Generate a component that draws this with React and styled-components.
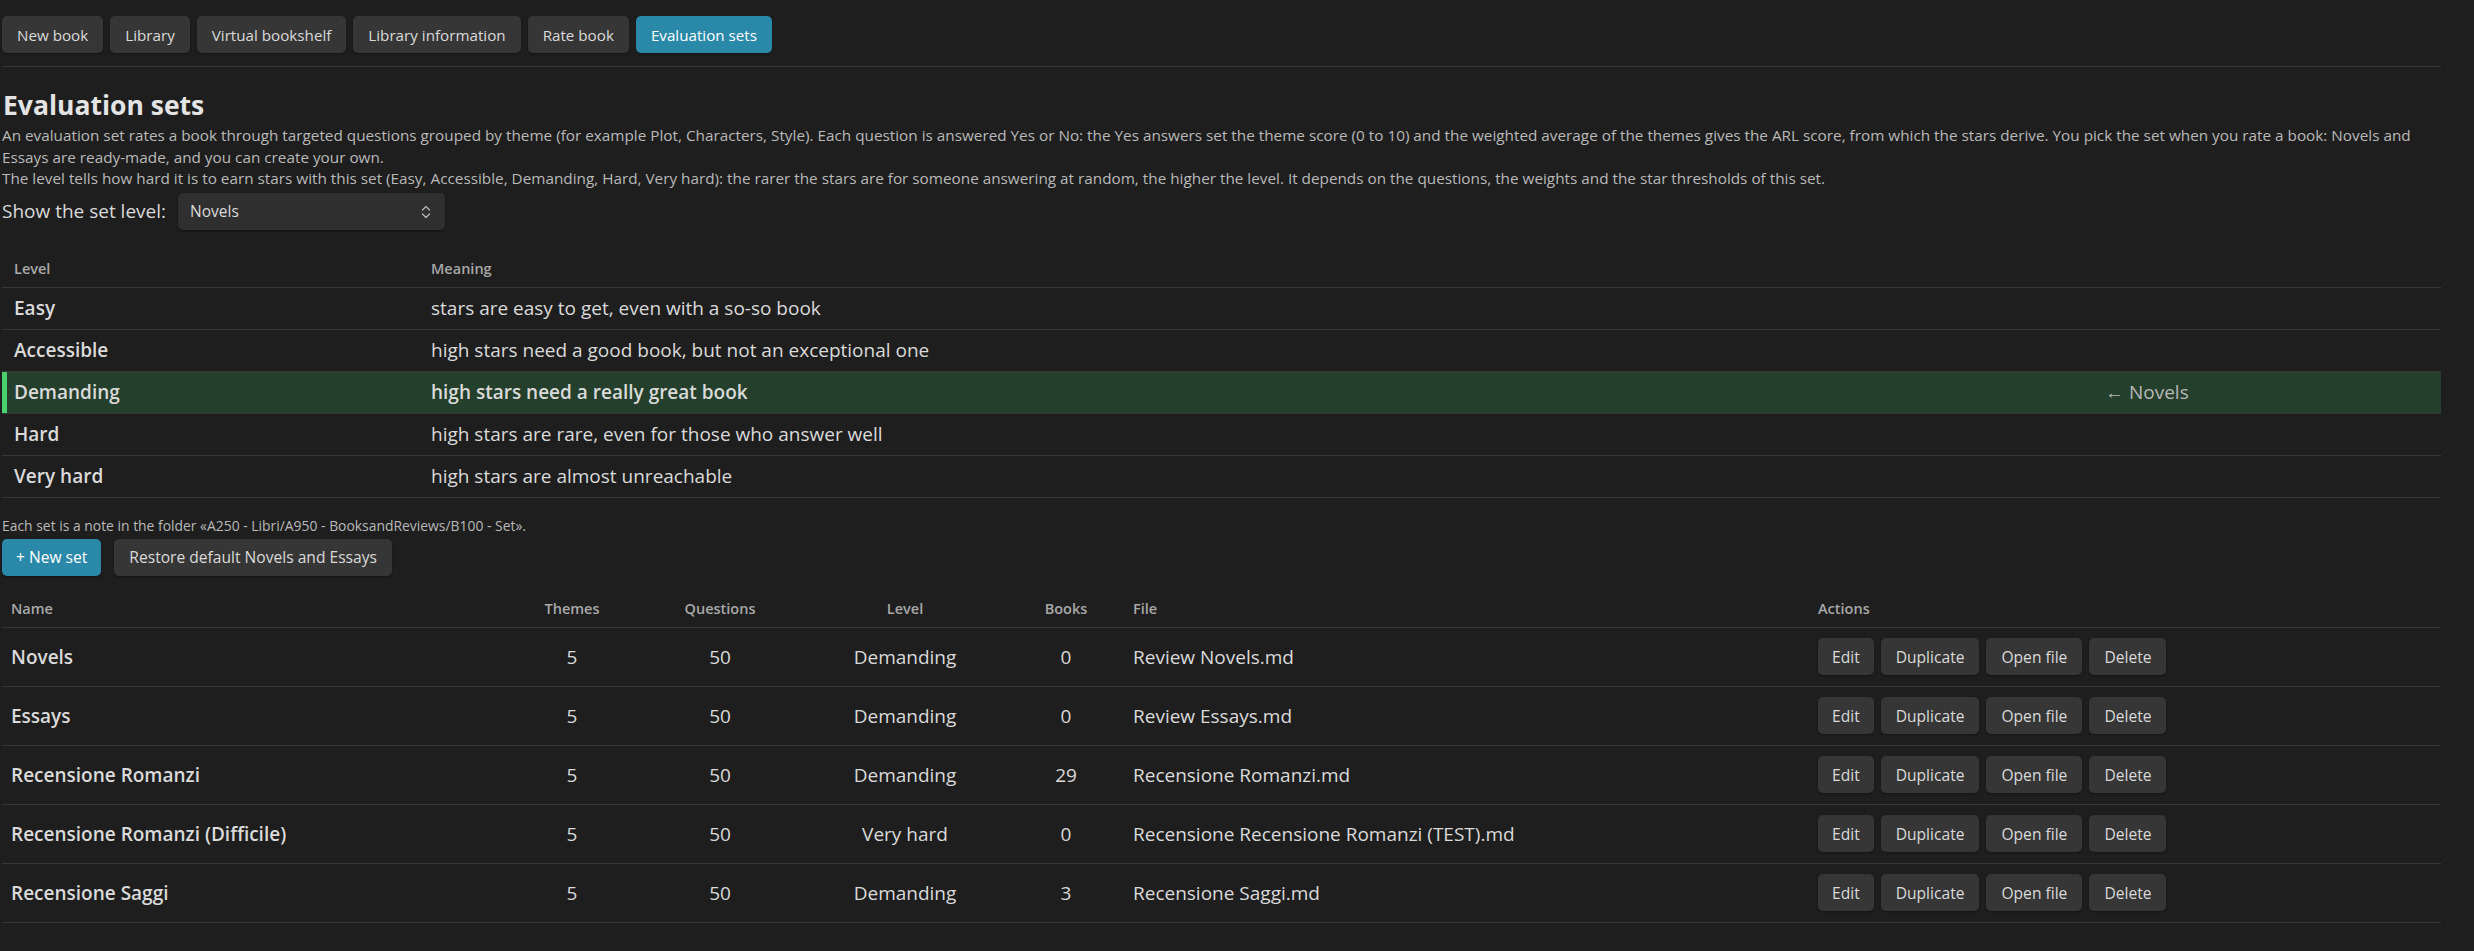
import React from 'react';
import styled, { createGlobalStyle } from 'styled-components';

const GlobalStyle = createGlobalStyle`
  html, body {
    margin: 0;
    background: #1e1e1e;
  }
  body {
    font-family: "Open Sans", "Noto Sans", sans-serif;
    color: #dadada;
  }
`;

/**
 * Styled Components
 */
const Page = styled.div`
  padding: 16px 33px 40px 2px;
`;

const NavBar = styled.div`
  display: flex;
  gap: 7px;
  padding-bottom: 13px;
  border-bottom: 1px solid #363636;
`;

const Button = styled.button`
  height: 37px;
  padding: 0 ${(p) => (p.$tight ? 14 : 15)}px;
  border: none;
  border-radius: 5px;
  background: ${(p) => (p.$accent ? '#2a88a8' : '#363636')};
  color: ${(p) => (p.$accent ? '#ffffff' : '#dadada')};
  font-family: inherit;
  font-size: ${(p) => (p.$nav ? 15.2 : 15.6)}px;
  box-shadow: 0 1px 2px rgba(0, 0, 0, 0.35);
  cursor: pointer;
  white-space: nowrap;
`;

const Title = styled.h2`
  margin: 21px 0 3px 1px;
  font-size: 26.5px;
  font-weight: 700;
  line-height: 34px;
  color: #e4e4e4;
`;

const Intro = styled.p`
  margin: 0;
  font-size: 15.3px;
  line-height: 21.5px;
  color: #b9b9b9;
`;

const Picker = styled.div`
  display: flex;
  align-items: center;
  gap: 12px;
  margin-top: 3px;
`;

const PickerLabel = styled.label`
  font-size: 19px;
  color: #dadada;
`;

const SelectWrap = styled.div`
  position: relative;
  width: 267px;
`;

const Select = styled.select`
  appearance: none;
  width: 100%;
  height: 37px;
  padding: 0 12px;
  border: none;
  border-radius: 5px;
  background: #2f2f2f;
  color: #dadada;
  font-family: inherit;
  font-size: 15.5px;
  box-shadow: 0 1px 2px rgba(0, 0, 0, 0.4);
`;

const SelectIcon = styled.svg`
  position: absolute;
  right: 14px;
  top: 12px;
  pointer-events: none;
`;

const LevelTable = styled.div`
  margin-top: 21px;
`;

const LevelRow = styled.div`
  display: grid;
  grid-template-columns: 417px 1674px 1fr;
  align-items: center;
  height: ${(p) => (p.$head ? 36 : 41)}px;
  border-bottom: 1px solid #363636;
  background: ${(p) => (p.$active ? '#243f2b' : 'transparent')};
  box-shadow: ${(p) => (p.$active ? 'inset 5px 0 0 #4bd16c' : 'none')};
`;

const LevelCell = styled.div`
  padding: 0 12px;
  font-size: ${(p) => (p.$head ? 14.5 : 19)}px;
  font-weight: ${(p) => (p.$head || p.$bold ? 600 : 400)};
  color: ${(p) => (p.$head ? '#a8a8a8' : p.$muted ? '#b8b8b8' : '#dadada')};
`;

const Note = styled.div`
  margin-top: 18px;
  font-size: 13.9px;
  line-height: 20px;
  color: #b9b9b9;
`;

const Toolbar = styled.div`
  display: flex;
  gap: 13px;
  margin-top: 3px;
`;

const SetsTable = styled.div`
  margin-top: 14px;
`;

const SetRow = styled.div`
  display: grid;
  grid-template-columns: 504px 132px 164px 206px 116px 685px 1fr;
  align-items: center;
  min-height: ${(p) => (p.$head ? 37 : 58)}px;
  border-bottom: 1px solid #363636;
`;

const SetCell = styled.div`
  padding: 0 9px;
  text-align: ${(p) => (p.$center ? 'center' : 'left')};
  font-size: ${(p) => (p.$head ? 14.5 : 19)}px;
  font-weight: ${(p) => (p.$head || p.$bold ? 600 : 400)};
  color: ${(p) => (p.$head ? '#a8a8a8' : '#dadada')};
`;

const Actions = styled.div`
  display: flex;
  gap: 7px;
`;

/**
 * Data
 */
const tabs = ['New book', 'Library', 'Virtual bookshelf', 'Library information', 'Rate book', 'Evaluation sets'];

const levels = [
  ['Easy', 'stars are easy to get, even with a so-so book'],
  ['Accessible', 'high stars need a good book, but not an exceptional one'],
  ['Demanding', 'high stars need a really great book'],
  ['Hard', 'high stars are rare, even for those who answer well'],
  ['Very hard', 'high stars are almost unreachable'],
];

const sets = [
  { name: 'Novels', themes: 5, questions: 50, level: 'Demanding', books: 0, file: 'Review Novels.md' },
  { name: 'Essays', themes: 5, questions: 50, level: 'Demanding', books: 0, file: 'Review Essays.md' },
  { name: 'Recensione Romanzi', themes: 5, questions: 50, level: 'Demanding', books: 29, file: 'Recensione Romanzi.md' },
  { name: 'Recensione Romanzi (Difficile)', themes: 5, questions: 50, level: 'Very hard', books: 0, file: 'Recensione Recensione Romanzi (TEST).md' },
  { name: 'Recensione Saggi', themes: 5, questions: 50, level: 'Demanding', books: 3, file: 'Recensione Saggi.md' },
];

const App = () => {
  const selected = 'Novels';
  const selectedLevel = 'Demanding';

  return (
    <Page>
      <GlobalStyle />
      <NavBar>
        {tabs.map((t) => (
          <Button key={t} $nav $accent={t === 'Evaluation sets'}>{t}</Button>
        ))}
      </NavBar>

      <Title>Evaluation sets</Title>
      <Intro>
        An evaluation set rates a book through targeted questions grouped by theme (for example Plot, Characters, Style). Each question is answered Yes or No: the Yes answers set the theme score (0 to 10) and the weighted average of the themes gives the ARL score, from which the stars derive. You pick the set when you rate a book: Novels and Essays are ready-made, and you can create your own.
      </Intro>
      <Intro>
        The level tells how hard it is to earn stars with this set (Easy, Accessible, Demanding, Hard, Very hard): the rarer the stars are for someone answering at random, the higher the level. It depends on the questions, the weights and the star thresholds of this set.
      </Intro>

      <Picker>
        <PickerLabel>Show the set level:</PickerLabel>
        <SelectWrap>
          <Select defaultValue={selected}>
            {sets.map((s) => (
              <option key={s.name}>{s.name}</option>
            ))}
          </Select>
          <SelectIcon width="10" height="14" viewBox="0 0 10 14" fill="none" stroke="#b3b3b3" strokeWidth="1.4" strokeLinecap="round" strokeLinejoin="round">
            <path d="M1.5 5 L5 1.5 L8.5 5" />
            <path d="M1.5 9 L5 12.5 L8.5 9" />
          </SelectIcon>
        </SelectWrap>
      </Picker>

      <LevelTable>
        <LevelRow $head>
          <LevelCell $head>Level</LevelCell>
          <LevelCell $head>Meaning</LevelCell>
          <LevelCell $head />
        </LevelRow>
        {levels.map(([lvl, meaning]) => {
          const active = lvl === selectedLevel;
          return (
            <LevelRow key={lvl} $active={active}>
              <LevelCell $bold>{lvl}</LevelCell>
              <LevelCell $bold={active}>{meaning}</LevelCell>
              <LevelCell $muted>{active ? `← ${selected}` : ''}</LevelCell>
            </LevelRow>
          );
        })}
      </LevelTable>

      <Note>Each set is a note in the folder «A250 - Libri/A950 - BooksandReviews/B100 - Set».</Note>
      <Toolbar>
        <Button $accent $tight>+ New set</Button>
        <Button>Restore default Novels and Essays</Button>
      </Toolbar>

      <SetsTable>
        <SetRow $head>
          <SetCell $head>Name</SetCell>
          <SetCell $head $center>Themes</SetCell>
          <SetCell $head $center>Questions</SetCell>
          <SetCell $head $center>Level</SetCell>
          <SetCell $head $center>Books</SetCell>
          <SetCell $head>File</SetCell>
          <SetCell $head>Actions</SetCell>
        </SetRow>
        {sets.map((s) => (
          <SetRow key={s.name}>
            <SetCell $bold>{s.name}</SetCell>
            <SetCell $center>{s.themes}</SetCell>
            <SetCell $center>{s.questions}</SetCell>
            <SetCell $center>{s.level}</SetCell>
            <SetCell $center>{s.books}</SetCell>
            <SetCell>{s.file}</SetCell>
            <SetCell>
              <Actions>
                <Button $tight>Edit</Button>
                <Button>Duplicate</Button>
                <Button>Open file</Button>
                <Button>Delete</Button>
              </Actions>
            </SetCell>
          </SetRow>
        ))}
      </SetsTable>
    </Page>
  );
};

export default App;
